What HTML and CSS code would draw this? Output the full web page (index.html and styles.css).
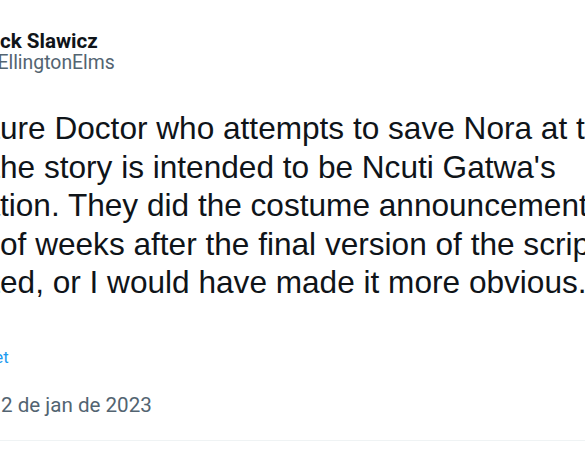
FILE: index.html
```html
<!DOCTYPE html>
<html lang="pt-BR">
<head>
<meta charset="utf-8">
<link rel="stylesheet" href="styles.css">
</head>
<body>
<article class="tweet">
  <header class="head">
    <div class="avatar"></div>
    <div class="who">
      <div class="name">Nick Slawicz</div>
      <div class="handle">@EllingtonElms</div>
    </div>
  </header>
  <p class="text">
    <span class="line"><span class="cut">The fut</span>ure Doctor who attempts to save Nora at the</span>
    <span class="line"><span class="cut">end of t</span>he story is intended to be Ncuti Gatwa's</span>
    <span class="line"><span class="cut">incarna</span>tion. They did the costume announcement a</span>
    <span class="line"><span class="cut">couple&nbsp;</span>of weeks after the final version of the script was</span>
    <span class="line"><span class="cut">submitt</span>ed, or I would have made it more obvious.</span>
  </p>
  <a class="translate">Translate Tweet</a>
  <div class="meta">9:41 PM · 12 de jan de 2023</div>
  <div class="divider"></div>
</article>
</body>
</html>
```
FILE: styles.css
```css
html, body {
  margin: 0;
  background: #ffffff;
}
body {
  width: 585px;
  height: 461px;
  overflow: hidden;
  font-family: Roboto, "Liberation Sans", sans-serif;
  color: #0f1419;
}
.tweet {
  margin-left: -102px;
  width: 900px;
  padding-top: 30px;
}
.head {
  display: flex;
  align-items: center;
  gap: 16px;
  height: 44px;
}
.avatar {
  width: 66px;
  height: 66px;
  border-radius: 50%;
  background: #c9d3da;
  flex: none;
}
.who {
  display: flex;
  flex-direction: column;
}
.name {
  font-weight: 700;
  font-size: 20.6px;
  line-height: 22px;
  color: #0f1419;
}
.handle {
  font-size: 19.4px;
  line-height: 22px;
  color: #536471;
}
.text {
  margin: 35px 0 0 -18px;
  font-family: "Liberation Sans", Arial, sans-serif;
  font-size: 31.6px;
  line-height: 38.5px;
  white-space: nowrap;
  color: #0f1419;
}
.line {
  display: block;
}
.cut {
  display: inline-block;
  width: 120px;
  text-align: right;
}
.translate {
  display: block;
  margin: 43px 0 0 -8px;
  font-size: 16.8px;
  line-height: 24px;
  color: #1d9bf0;
}
.meta {
  margin-top: 22px;
  font-size: 20.6px;
  line-height: 28px;
  color: #536471;
}
.divider {
  margin-top: 21px;
  height: 1px;
  background: #eff3f4;
}
```
